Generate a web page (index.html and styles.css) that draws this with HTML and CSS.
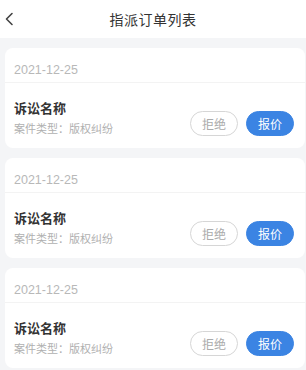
FILE: index.html
```html
<!DOCTYPE html>
<html lang="zh">
<head>
<meta charset="utf-8">
<link rel="stylesheet" href="styles.css">
</head>
<body>
<div class="page">
  <header class="nav">
    <svg class="back" width="10" height="14" viewBox="0 0 10 14"><path d="M8 1.5 L2.5 7 L8 12.5" fill="none" stroke="#444" stroke-width="1.6" stroke-linecap="round" stroke-linejoin="round"/></svg>
    <div class="title">指派订单列表</div>
  </header>
  <main class="list">
    <div class="card">
      <div class="date">2021-12-25</div>
      <div class="body">
        <div class="info">
          <div class="name">诉讼名称</div>
          <div class="type">案件类型：版权纠纷</div>
        </div>
        <div class="actions">
          <button class="btn reject">拒绝</button>
          <button class="btn quote">报价</button>
        </div>
      </div>
    </div>
    <div class="card">
      <div class="date">2021-12-25</div>
      <div class="body">
        <div class="info">
          <div class="name">诉讼名称</div>
          <div class="type">案件类型：版权纠纷</div>
        </div>
        <div class="actions">
          <button class="btn reject">拒绝</button>
          <button class="btn quote">报价</button>
        </div>
      </div>
    </div>
    <div class="card">
      <div class="date">2021-12-25</div>
      <div class="body">
        <div class="info">
          <div class="name">诉讼名称</div>
          <div class="type">案件类型：版权纠纷</div>
        </div>
        <div class="actions">
          <button class="btn reject">拒绝</button>
          <button class="btn quote">报价</button>
        </div>
      </div>
    </div>
  </main>
</div>
</body>
</html>
```
FILE: styles.css
```css
* { box-sizing: border-box; }
html, body { margin: 0; padding: 0; }
body {
  background: #f4f5f7;
  font-family: "Noto Sans CJK SC", "Noto Sans", sans-serif;
  width: 306px;
  height: 370px;
  overflow: hidden;
}
.nav {
  position: relative;
  height: 38px;
  background: #fff;
  display: flex;
  align-items: center;
  justify-content: center;
}
.back {
  position: absolute;
  left: 4px;
  top: 12px;
}
.title {
  font-size: 14px;
  color: #333;
  letter-spacing: 0.5px;
}
.list {
  display: flex;
  flex-direction: column;
  gap: 10px;
  padding: 10px 1px 0 5px;
}
.card {
  background: #fff;
  border-radius: 8px;
  height: 100px;
  display: flex;
  flex-direction: column;
}
.date {
  height: 35px;
  padding: 14px 0 0 9px;
  font-family: "Liberation Sans", "Noto Sans", sans-serif;
  font-size: 12.5px;
  line-height: 16px;
  color: #b8b8b8;
  border-bottom: 1px solid #f3f3f3;
}
.body {
  flex: 1;
  display: flex;
  align-items: flex-end;
  justify-content: space-between;
  padding: 0 11px 12px 9px;
}
.info {
  display: flex;
  flex-direction: column;
  gap: 3px;
}
.name {
  font-size: 13px;
  font-weight: 700;
  color: #333;
  line-height: 18px;
}
.type {
  font-size: 11px;
  color: #b0b0b0;
  line-height: 16px;
}
.actions {
  display: flex;
  gap: 8px;
}
.btn {
  width: 48px;
  height: 25px;
  border-radius: 13px;
  font-family: "Noto Sans CJK SC", sans-serif;
  font-size: 12px;
  padding: 0;
  line-height: 23px;
}
.reject {
  background: #fff;
  border: 1px solid #d6d6d6;
  color: #aaa;
}
.quote {
  background: #3b84e3;
  border: 1px solid #3b84e3;
  color: #fff;
}
```
